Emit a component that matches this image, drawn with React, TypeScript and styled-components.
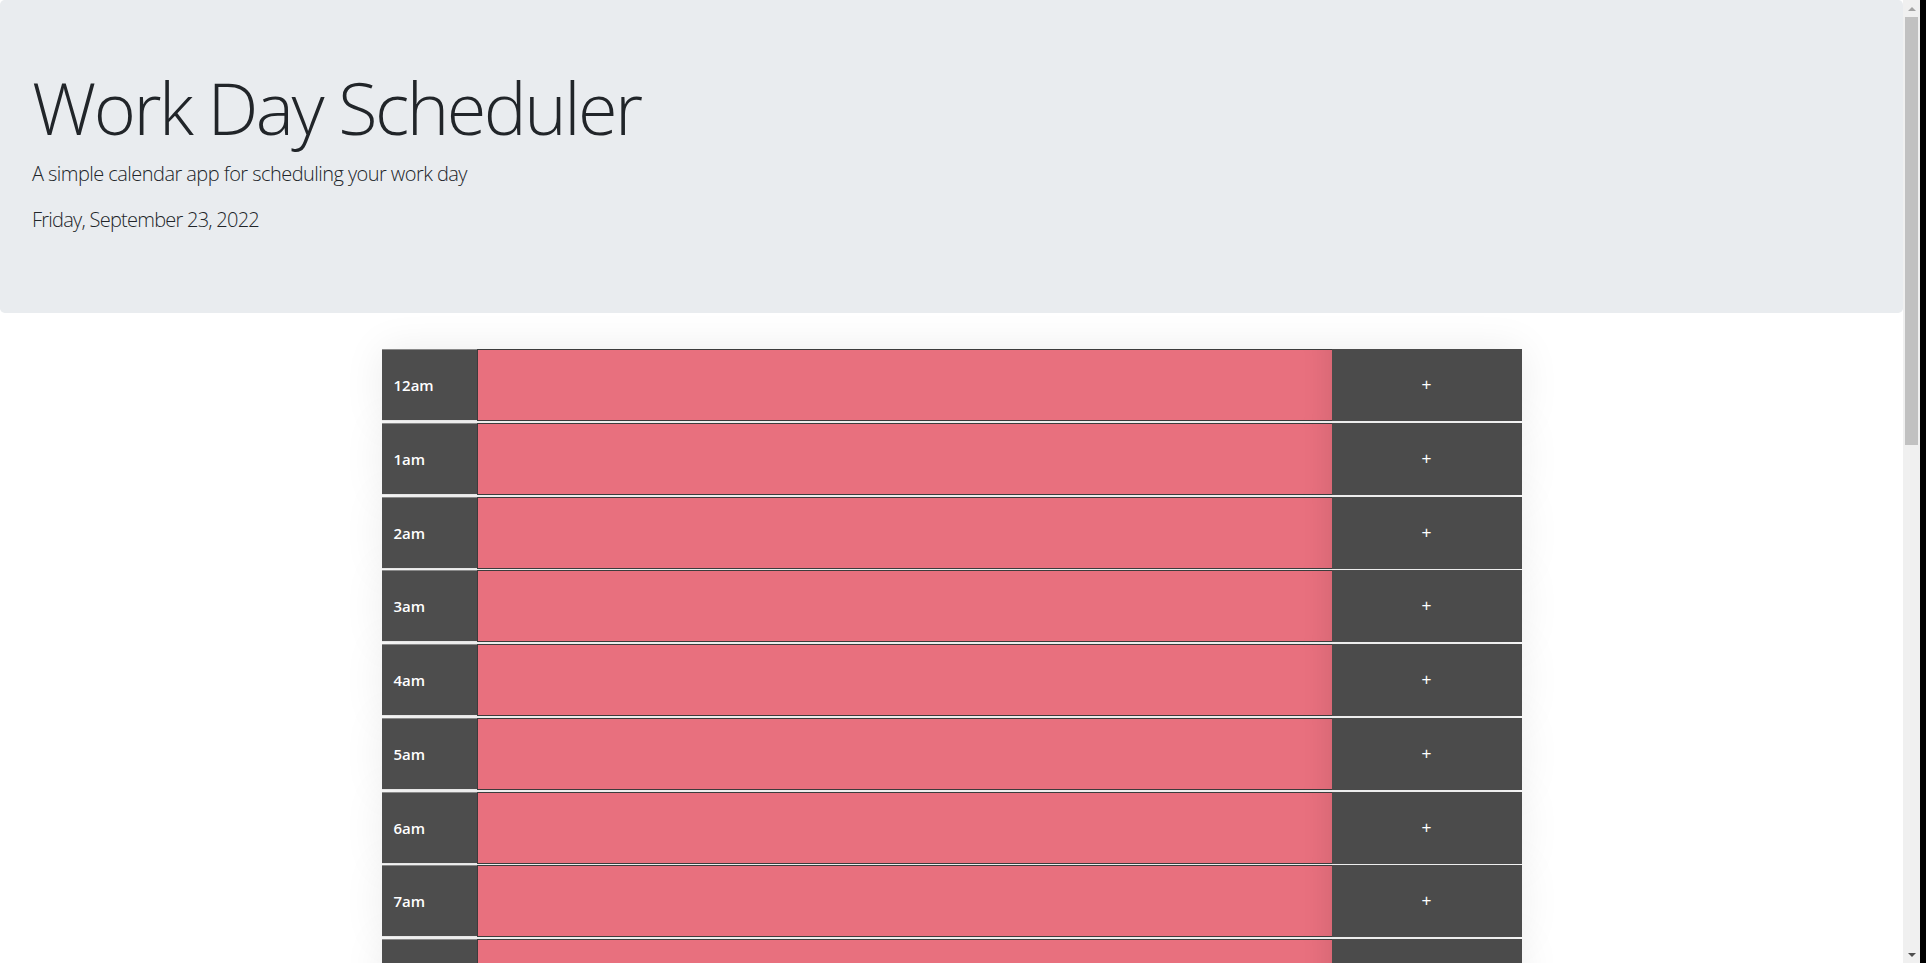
import React from 'react';
import styled, { createGlobalStyle } from 'styled-components';

const GlobalStyle = createGlobalStyle`
  html, body {
    margin: 0;
    padding: 0;
    height: 100%;
    overflow: hidden;
  }

  body {
    font-family: "Open Sans", "Noto Sans", "Liberation Sans", sans-serif;
    color: #212529;
    background: #000;
  }
`;

const Frame = styled.div`
  display: flex;
  height: 100vh;
`;

const Page = styled.div`
  flex: 1;
  height: 100%;
  overflow: hidden;
  background: #fff;
`;

/* window scrollbar as it appears in the capture */
const Scrollbar = styled.div`
  width: 17px;
  display: flex;
  flex-direction: column;
  align-items: center;
  background: #f0f0f0;
`;

const ArrowButton = styled.div`
  height: 17px;
  width: 100%;
  display: flex;
  align-items: center;
  justify-content: center;
`;

const Arrow = styled.span<{ $dir: 'up' | 'down' }>`
  width: 0;
  height: 0;
  border-left: 4px solid transparent;
  border-right: 4px solid transparent;
  ${(p) =>
    p.$dir === 'up'
      ? 'border-bottom: 4px solid #a3a3a3;'
      : 'border-top: 4px solid #505050;'}
`;

const Thumb = styled.div`
  width: 13px;
  height: 428px;
  background: #c1c1c1;
`;

const Track = styled.div`
  flex: 1;
`;

/* the strip past the scrollbar in the reference capture */
const Edge = styled.div`
  width: 6px;
  background: #000;
`;

const Jumbotron = styled.header`
  background: #e9ecef;
  padding: 64px 32px 62px;
  border-radius: 4.8px;
  margin-bottom: 32px;
`;

const Title = styled.h1`
  margin: 0 0 9px;
  font-size: 72px;
  font-weight: 300;
  line-height: 1.2;
  letter-spacing: -2.5px;
`;

const Lead = styled.p`
  margin: 0 0 16px;
  font-size: 20px;
  font-weight: 300;
  line-height: 1.5;
  letter-spacing: -0.55px;
`;

const CurrentDay = styled(Lead)`
  letter-spacing: -0.75px;
`;

const Schedule = styled.main`
  width: 1140px;
  margin: 0 auto;
  padding: 4px 0 32px;
`;

const TimeBlock = styled.div`
  display: grid;
  grid-template-columns: 95px 855px 190px;
  height: 72px;
  margin-bottom: 1.7px;
  box-shadow: 0 0 40px rgba(0, 0, 0, 0.08);
`;

const Hour = styled.div`
  display: flex;
  align-items: center;
  padding-left: 12px;
  background: #4d4d4d;
  color: #fff;
  font-size: 15px;
  font-weight: 600;
  border-top: 1px solid #8a8a8a;
  border-bottom: 1px solid #e6e6e6;
`;

const Description = styled.textarea<{ $state: 'past' | 'present' | 'future' }>`
  box-sizing: border-box;
  width: 100%;
  height: 100%;
  margin: 0;
  padding: 10px;
  resize: none;
  border: 1px solid #3c3c3c;
  border-right: none;
  outline: none;
  font-family: inherit;
  font-size: 16px;
  color: #fff;
  background: ${(p) =>
    p.$state === 'past' ? '#e8707e' : p.$state === 'present' ? '#ff6961' : '#77dd77'};
  box-shadow: inset -30px 0 30px -30px rgba(0, 0, 0, 0.12);
`;

const SaveBtn = styled.button`
  border: none;
  margin: 0;
  background: #4b4b4b;
  color: #ffffff;
  font-family: "Liberation Sans", sans-serif;
  font-size: 17px;
  font-weight: 400;
  cursor: pointer;
`;

const hours = Array.from({ length: 24 }, (_, h) => {
  const n = h % 12 === 0 ? 12 : h % 12;
  return `${n}${h < 12 ? 'am' : 'pm'}`;
});

export default function App() {
  return (
    <>
      <GlobalStyle />
      <Frame>
        <Page>
          <Jumbotron>
            <Title>Work Day Scheduler</Title>
            <Lead>A simple calendar app for scheduling your work day</Lead>
            <CurrentDay>Friday, September 23, 2022</CurrentDay>
          </Jumbotron>
          <Schedule>
            {hours.map((label) => (
              <TimeBlock key={label}>
                <Hour>{label}</Hour>
                <Description $state="past" />
                <SaveBtn>+</SaveBtn>
              </TimeBlock>
            ))}
          </Schedule>
        </Page>
        <Scrollbar>
          <ArrowButton>
            <Arrow $dir="up" />
          </ArrowButton>
          <Thumb />
          <Track />
          <ArrowButton>
            <Arrow $dir="down" />
          </ArrowButton>
        </Scrollbar>
        <Edge />
      </Frame>
    </>
  );
}
